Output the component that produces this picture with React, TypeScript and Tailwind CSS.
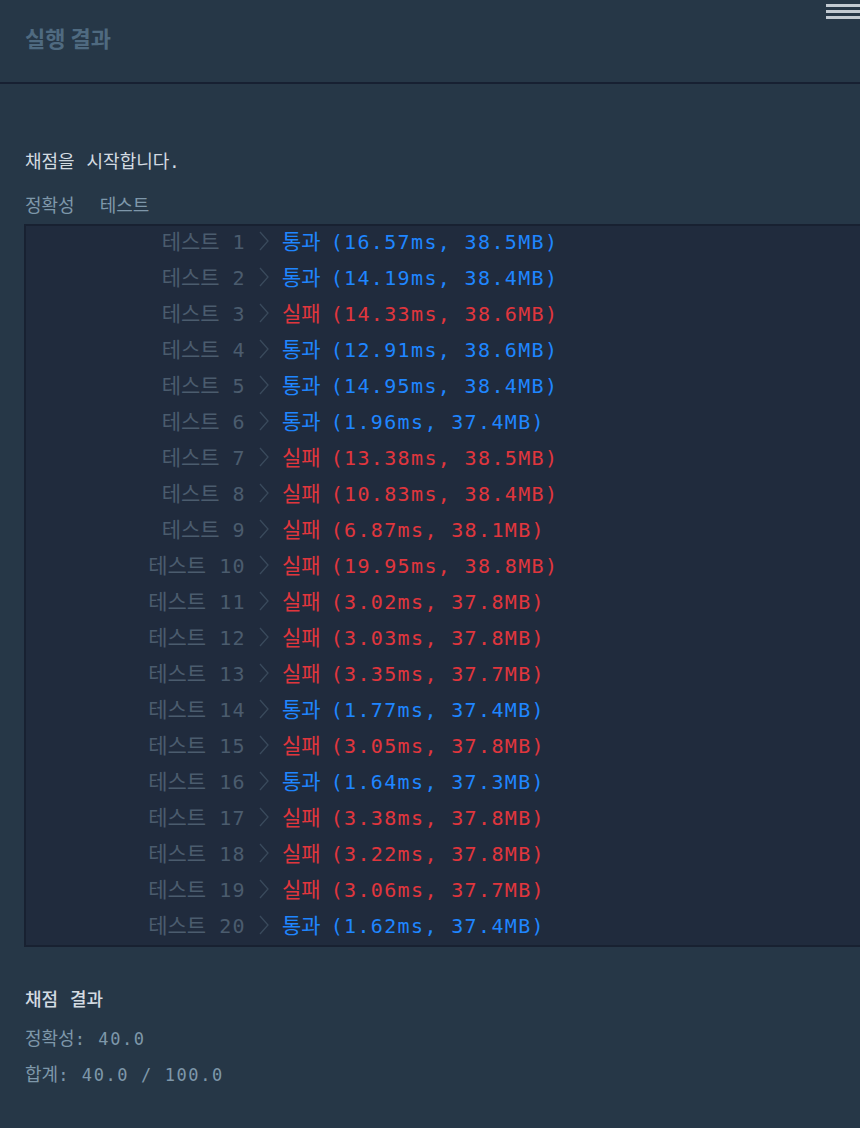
import React from 'react'

type Row = { n: number; pass: boolean; time: string; mem: string }

const rows: Row[] = [
    { n: 1, pass: true, time: '16.57ms', mem: '38.5MB' },
    { n: 2, pass: true, time: '14.19ms', mem: '38.4MB' },
    { n: 3, pass: false, time: '14.33ms', mem: '38.6MB' },
    { n: 4, pass: true, time: '12.91ms', mem: '38.6MB' },
    { n: 5, pass: true, time: '14.95ms', mem: '38.4MB' },
    { n: 6, pass: true, time: '1.96ms', mem: '37.4MB' },
    { n: 7, pass: false, time: '13.38ms', mem: '38.5MB' },
    { n: 8, pass: false, time: '10.83ms', mem: '38.4MB' },
    { n: 9, pass: false, time: '6.87ms', mem: '38.1MB' },
    { n: 10, pass: false, time: '19.95ms', mem: '38.8MB' },
    { n: 11, pass: false, time: '3.02ms', mem: '37.8MB' },
    { n: 12, pass: false, time: '3.03ms', mem: '37.8MB' },
    { n: 13, pass: false, time: '3.35ms', mem: '37.7MB' },
    { n: 14, pass: true, time: '1.77ms', mem: '37.4MB' },
    { n: 15, pass: false, time: '3.05ms', mem: '37.8MB' },
    { n: 16, pass: true, time: '1.64ms', mem: '37.3MB' },
    { n: 17, pass: false, time: '3.38ms', mem: '37.8MB' },
    { n: 18, pass: false, time: '3.22ms', mem: '37.8MB' },
    { n: 19, pass: false, time: '3.06ms', mem: '37.7MB' },
    { n: 20, pass: true, time: '1.62ms', mem: '37.4MB' },
]

const mono = "font-['DejaVu_Sans_Mono','Noto_Sans_CJK_KR',monospace]"
const kr = "font-['Noto_Sans_CJK_KR',sans-serif] tracking-normal"

function Chevron() {
    return (
        <svg width="12" height="22" viewBox="0 0 12 22" className="ml-[12px] mr-[12px] shrink-0">
            <path d="M2 2 L10 11 L2 20" fill="none" stroke="#3a4a5c" strokeWidth="1.3" />
        </svg>
    )
}

function ResultRow({ row }: { row: Row }) {
    const color = row.pass ? 'text-[#1f86ff]' : 'text-[#e0363d]'
    return (
        <div className="flex h-[36px] items-center">
            <div className="flex w-[220px] justify-end items-baseline text-[#4b5c6e]">
                <span className={`text-[21px] ${kr}`}>테스트</span>
                <span className="ml-[13px] text-[20px] tracking-[1.35px]">{row.n}</span>
            </div>
            <Chevron />
            <div className={`flex items-baseline ${color}`}>
                <span className={`text-[21px] ${kr}`}>{row.pass ? '통과' : '실패'}</span>
                <span className="ml-[10px] text-[20px] tracking-[1.35px]">({row.time}, {row.mem})</span>
            </div>
        </div>
    )
}

export default function App() {
    return (
        <div className={`w-[860px] h-[1128px] overflow-hidden bg-[#263747] ${mono}`}>
            <header className="relative h-[84px] border-b-2 border-[#172032]">
                <div className={`pl-[25px] pt-[21px] text-[22px] font-bold text-[#4f6a80] ${kr}`}>실행 결과</div>
                <div className="absolute right-0 top-[4px] flex w-[34px] flex-col gap-[3px]">
                    <div className="h-[3px] bg-[#c2cad2]" />
                    <div className="h-[3px] bg-[#c2cad2]" />
                    <div className="h-[3px] bg-[#c2cad2]" />
                </div>
            </header>

            <section className="pt-[63px]">
                <p className="pl-[25px] text-[17px] text-[#d3dbe2] tracking-[1.6px]">
                    <span className={`${kr} text-[18px]`}>채점을</span> <span className={`${kr} text-[18px]`}>시작합니다</span>.
                </p>
                <p className={`pl-[25px] mt-[15px] text-[18px] text-[#7e97aa] ${kr}`}>
                    정확성<span className="ml-[25px]">테스트</span>
                </p>
                <div className="ml-[24px] mt-[6px] border-2 border-r-0 border-[#182131] bg-[#202b3d] pb-[2px]">
                    <div className="-mt-[3px]">
                        {rows.map((row) => (
                            <ResultRow key={row.n} row={row} />
                        ))}
                    </div>
                </div>
            </section>

            <section className="pl-[25px] pt-[38px]">
                <p className="text-[17px] text-[#d3dbe2] tracking-[1.6px]">
                    <span className={`${kr} text-[18px] font-medium`}>채점</span> <span className={`${kr} text-[18px] font-medium`}>결과</span>
                </p>
                <p className="mt-[11px] text-[17px] text-[#7e97aa] tracking-[1.6px]">
                    <span className={`${kr} text-[18px]`}>정확성</span>: 40.0
                </p>
                <p className="mt-[7px] text-[17px] text-[#7e97aa] tracking-[1.6px]">
                    <span className={`${kr} text-[18px]`}>합계</span>: 40.0 / 100.0
                </p>
            </section>
        </div>
    )
}
